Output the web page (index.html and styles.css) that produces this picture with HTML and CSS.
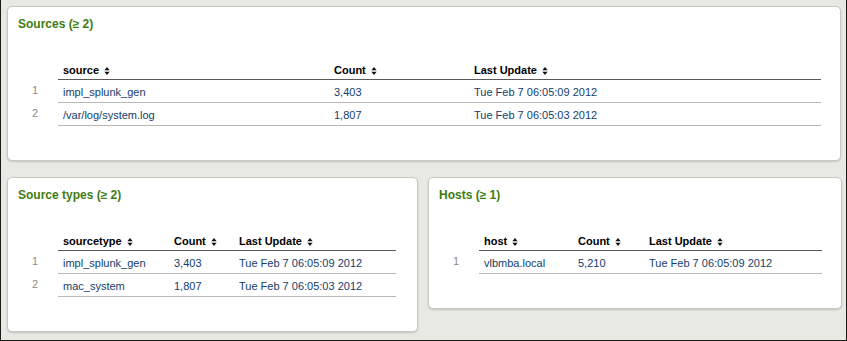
FILE: index.html
```html
<!DOCTYPE html>
<html>
<head>
<meta charset="utf-8">
<link rel="stylesheet" href="styles.css">
</head>
<body>
<div class="frame">
  <section class="panel">
    <h2 class="panel-title">Sources (≥ 2)</h2>
    <table class="data sources">
      <colgroup><col class="c-num"><col class="c-s1"><col class="c-s2"><col class="c-s3"></colgroup>
      <thead>
        <tr><th class="num"></th><th>source <svg class="sort" viewBox="0 0 6 9"><polygon points="0,3.6 3,0 6,3.6"/><polygon points="0,5.4 6,5.4 3,9"/></svg></th><th>Count <svg class="sort" viewBox="0 0 6 9"><polygon points="0,3.6 3,0 6,3.6"/><polygon points="0,5.4 6,5.4 3,9"/></svg></th><th>Last Update <svg class="sort" viewBox="0 0 6 9"><polygon points="0,3.6 3,0 6,3.6"/><polygon points="0,5.4 6,5.4 3,9"/></svg></th></tr>
      </thead>
      <tbody>
        <tr><td class="num">1</td><td>impl_splunk_gen</td><td>3,403</td><td>Tue Feb 7 06:05:09 2012</td></tr>
        <tr><td class="num">2</td><td>/var/log/system.log</td><td>1,807</td><td>Tue Feb 7 06:05:03 2012</td></tr>
      </tbody>
    </table>
  </section>
  <div class="row">
    <section class="panel">
      <h2 class="panel-title">Source types (≥ 2)</h2>
      <table class="data stypes">
        <colgroup><col class="c-num"><col class="c-t1"><col class="c-t2"><col class="c-t3"></colgroup>
        <thead>
          <tr><th class="num"></th><th>sourcetype <svg class="sort" viewBox="0 0 6 9"><polygon points="0,3.6 3,0 6,3.6"/><polygon points="0,5.4 6,5.4 3,9"/></svg></th><th>Count <svg class="sort" viewBox="0 0 6 9"><polygon points="0,3.6 3,0 6,3.6"/><polygon points="0,5.4 6,5.4 3,9"/></svg></th><th>Last Update <svg class="sort" viewBox="0 0 6 9"><polygon points="0,3.6 3,0 6,3.6"/><polygon points="0,5.4 6,5.4 3,9"/></svg></th></tr>
        </thead>
        <tbody>
          <tr><td class="num">1</td><td>impl_splunk_gen</td><td>3,403</td><td>Tue Feb 7 06:05:09 2012</td></tr>
          <tr><td class="num">2</td><td>mac_system</td><td>1,807</td><td>Tue Feb 7 06:05:03 2012</td></tr>
        </tbody>
      </table>
    </section>
    <section class="panel">
      <h2 class="panel-title">Hosts (≥ 1)</h2>
      <table class="data hosts">
        <colgroup><col class="c-num"><col class="c-h1"><col class="c-h2"><col class="c-h3"></colgroup>
        <thead>
          <tr><th class="num"></th><th>host <svg class="sort" viewBox="0 0 6 9"><polygon points="0,3.6 3,0 6,3.6"/><polygon points="0,5.4 6,5.4 3,9"/></svg></th><th>Count <svg class="sort" viewBox="0 0 6 9"><polygon points="0,3.6 3,0 6,3.6"/><polygon points="0,5.4 6,5.4 3,9"/></svg></th><th>Last Update <svg class="sort" viewBox="0 0 6 9"><polygon points="0,3.6 3,0 6,3.6"/><polygon points="0,5.4 6,5.4 3,9"/></svg></th></tr>
        </thead>
        <tbody>
          <tr><td class="num">1</td><td>vlbmba.local</td><td>5,210</td><td>Tue Feb 7 06:05:09 2012</td></tr>
        </tbody>
      </table>
    </section>
  </div>
</div>
</body>
</html>
```
FILE: styles.css
```css
html, body {
  margin: 0;
  padding: 0;
}
body {
  font-family: "Liberation Sans", Arial, Helvetica, sans-serif;
  font-size: 11px;
  background: #e9e9e4;
}
.frame {
  box-sizing: border-box;
  width: 847px;
  height: 341px;
  border-left: 1px solid #1a1a1a;
  border-right: 1px solid #1a1a1a;
  border-bottom: 1px solid #1a1a1a;
  background: #e9e9e4;
  padding: 6px 5px 0 6px;
  display: flex;
  flex-direction: column;
  gap: 16px;
}
.row {
  display: grid;
  grid-template-columns: 411px 414px;
  column-gap: 10px;
  align-items: start;
}
.panel {
  background: #fff;
  border: 1px solid #c9c9c4;
  border-radius: 5px;
  box-shadow: 0 1px 2px rgba(0, 0, 0, 0.18);
  padding: 9px 10px 34px 10px;
}
.panel-title {
  margin: 0;
  font-size: 12px;
  line-height: 16px;
  font-weight: bold;
  color: #3e7c12;
}
.data {
  border-collapse: collapse;
  table-layout: fixed;
  margin-top: 27px;
}
.data th, .data td {
  text-align: left;
  padding: 0 0 0 5px;
  white-space: nowrap;
}
.data th {
  font-weight: bold;
  color: #000;
  line-height: 14px;
  padding-top: 4px;
  padding-bottom: 2px;
  border-bottom: 1px solid #5a5a5a;
}
.data td {
  color: #133d6b;
  height: 21px;
  line-height: 14px;
  padding-top: 1px;
  border-bottom: 1px solid #b8b8b8;
  vertical-align: middle;
}
.data th.num, .data td.num {
  border-bottom: none;
  text-align: right;
  padding: 0 20px 0 0;
}
.data td.num {
  color: #8a8a8a;
  vertical-align: top;
  padding-top: 3px;
  height: 19px;
}
.sort {
  width: 6px;
  height: 8px;
  margin-left: 2px;
  vertical-align: -1px;
  fill: #111;
}
.c-num { width: 40px; }
.c-s1 { width: 271px; }
.c-s2 { width: 140px; }
.c-s3 { width: 352px; }
.c-t1 { width: 111px; }
.c-t2 { width: 65px; }
.c-t3 { width: 162px; }
.c-h1 { width: 94px; }
.c-h2 { width: 71px; }
.c-h3 { width: 178px; }
```
